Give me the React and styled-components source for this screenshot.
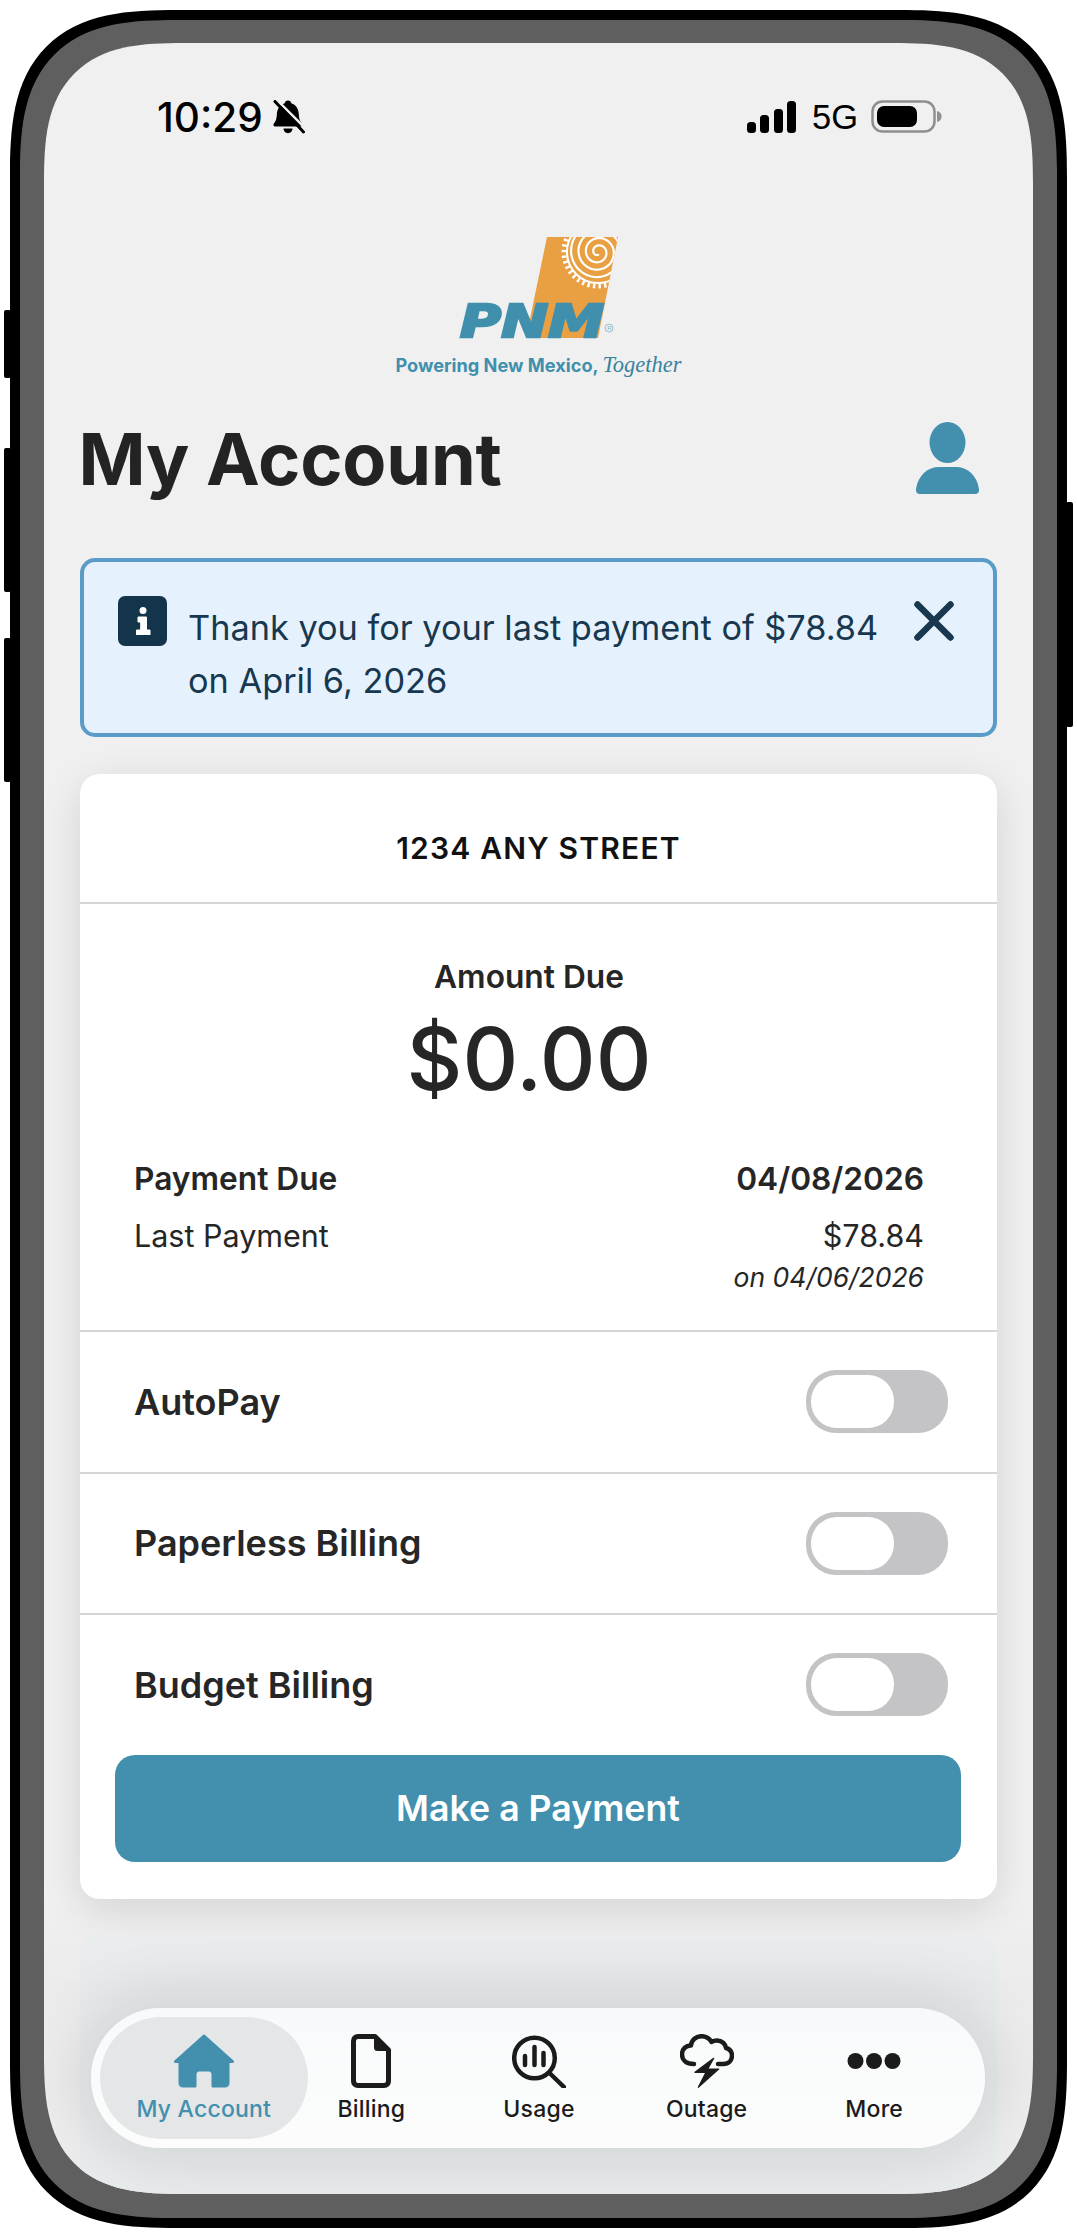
import React from "react";
import styled, { createGlobalStyle } from "styled-components";

const Global = createGlobalStyle`
  html, body { margin: 0; padding: 0; background: #fff; }
  * { box-sizing: border-box; }
  body { font-family: Inter, "Noto Sans", sans-serif; }
`;

const Stage = styled.div`
  width: 1077px;
  height: 2238px;
  padding: 10px;
  background: #fff;
`;
const Phone = styled.div`
  position: relative;
  height: 100%;
  border: 10px solid #000;
  border-radius: 168px;
  corner-shape: superellipse(1.5);
  background: #5f5f5f;
  padding: 23px 24px 24px 24px;
`;
const SideKey = styled.span`
  position: absolute;
  top: ${(p) => p.$top}px;
  height: ${(p) => p.$h}px;
  ${(p) => (p.$right ? "right: -16px;" : "left: -16px;")}
  width: 7px;
  background: #000;
  border-radius: 2px;
`;
const Screen = styled.div`
  position: relative;
  height: 100%;
  overflow: hidden;
  background: #f0f0f0;
  border-radius: 140px;
  corner-shape: superellipse(1.5);
  padding: 0 36px;
`;
const Status = styled.div`
  display: flex;
  justify-content: space-between;
  align-items: center;
  height: 33px;
  margin-top: 57px;
  padding: 0 55px 0 77px;
  color: #000;
`;
const StatusGroup = styled.div`
  display: flex;
  align-items: center;
  gap: ${(p) => p.$gap}px;
`;
const Clock = styled.span`
  font-size: 40.5px;
  font-weight: 500;
  line-height: 33px;
  padding-top: 2px;
`;
const Net = styled.span`
  font-family: "Liberation Sans", sans-serif;
  font-size: 34.5px;
  line-height: 33px;
  padding-top: 2px;
  margin-right: -3px;
`;
const Brand = styled.div`
  margin-top: 104px;
  display: flex;
  flex-direction: column;
  align-items: center;
`;
const Tagline = styled.div`
  height: 26px;
  line-height: 26px;
  font-size: 18.2px;
  font-weight: 650;
  color: #3f8fad;
  white-space: nowrap;
  em {
    font-family: "Liberation Serif", serif;
    font-style: italic;
    font-weight: 400;
    font-size: 22.5px;
    color: #38829f;
  }
`;
const TitleRow = styled.div`
  margin-top: 32px;
  height: 96px;
  display: flex;
  align-items: center;
  justify-content: space-between;
  padding-right: 17px;
`;
const Title = styled.h1`
  margin: 0 0 0 -1.5px;
  font-size: 72px;
  font-weight: 700;
  color: #232323;
  letter-spacing: -0.2px;
`;
const Alert = styled.div`
  margin-top: 52px;
  height: 179px;
  border: 4px solid #5a9bc8;
  border-radius: 15px;
  background: #e5f2fe;
  display: flex;
  padding: 34px 39px 0 34px;
  color: #17384f;
`;
const InfoBadge = styled.div`
  flex: none;
  width: 49px;
  height: 50px;
  border-radius: 7px;
  background: #14344b;
  display: flex;
  align-items: center;
  justify-content: center;
`;
const AlertText = styled.div`
  flex: 1;
  margin: 5px 0 0 21px;
  font-size: 34.3px;
  line-height: 53px;
`;
const CloseBox = styled.div`
  flex: none;
  margin-top: 5px;
`;
const Card = styled.section`
  margin-top: 37px;
  background: #fff;
  border-radius: 20px;
  box-shadow: 0 10px 40px rgba(0, 0, 0, 0.12);
  padding-bottom: 37px;
`;
const Address = styled.div`
  height: 130px;
  padding-top: 19px;
  display: flex;
  align-items: center;
  justify-content: center;
  border-bottom: 2.5px solid #d5d5d5;
  font-size: 30px;
  font-weight: 600;
  letter-spacing: 1.2px;
  color: #111;
`;
const Summary = styled.div`
  padding: 53px 73px 33px 54px;
  color: #262626;
`;
const DueLabel = styled.div`
  text-align: center;
  font-size: 31.7px;
  line-height: 40px;
  font-weight: 600;
`;
const DueAmount = styled.div`
  margin-top: 12px;
  text-align: center;
  font-size: 86.5px;
  font-weight: 450;
  line-height: 100px;
`;
const DetailRow = styled.div`
  display: flex;
  justify-content: space-between;
  font-size: ${(p) => (p.$bold ? 31.7 : 30.5)}px;
  line-height: 40px;
  font-weight: ${(p) => (p.$bold ? 600 : 400)};
  margin-top: ${(p) => p.$mt}px;
`;
const PayDate = styled.div`
  text-align: right;
  font-size: 26.5px;
  line-height: 40px;
  font-style: italic;
  margin-top: 1px;
`;
const ToggleRow = styled.div`
  height: 141.5px;
  border-top: 2.5px solid #d5d5d5;
  display: flex;
  align-items: center;
  justify-content: space-between;
  padding: 0 49px 0 54px;
  font-size: 36px;
  font-weight: 600;
  color: #262626;
`;
const Toggle = styled.div`
  width: 142px;
  height: 63px;
  border-radius: 30px;
  background: #c4c4c6;
  padding: 5px;
  display: flex;
`;
const Knob = styled.div`
  width: 83px;
  height: 53px;
  border-radius: 26px;
  background: #fff;
`;
const PayButton = styled.div`
  margin: 0 36px 0 35px;
  height: 107px;
  border-radius: 20px;
  background: #428fae;
  color: #fff;
  font-size: 35.7px;
  font-weight: 600;
  display: flex;
  align-items: center;
  justify-content: center;
`;
const NextCard = styled.section`
  margin-top: 36px;
  height: 300px;
  background: #ebeff0;
  border-radius: 20px;
`;
const Fade = styled.div`
  position: absolute;
  left: 0;
  right: 0;
  bottom: 0;
  height: 300px;
  background: linear-gradient(180deg, rgba(0,0,0,0) 0%, rgba(0,0,0,0.02) 30%, rgba(0,0,0,0.01) 100%);
`;
const TabBar = styled.nav`
  position: absolute;
  left: 47px;
  right: 48px;
  bottom: 46px;
  height: 140px;
  border-radius: 70px;
  background: linear-gradient(180deg, #f7fafb 0%, #fcfcfc 100%);
  box-shadow: 0 0 60px 14px rgba(0, 0, 0, 0.1);
  padding: 0 27px 0 29px;
  display: grid;
  grid-template-columns: repeat(5, 1fr);
  align-items: center;
`;
const ActivePill = styled.span`
  position: absolute;
  left: 9px;
  top: 9px;
  width: 208px;
  height: 122px;
  border-radius: 61px;
  background: #e4e6e7;
`;
const Tab = styled.div`
  position: relative;
  display: flex;
  flex-direction: column;
  align-items: center;
  color: ${(p) => (p.$active ? "#428fae" : "#1b1b1b")};
  font-size: 23px;
  font-weight: 450;
  letter-spacing: 0.2px;
  padding-top: 1px;
`;
const TabIcon = styled.div`
  height: 54px;
  display: flex;
  align-items: center;
  justify-content: center;
`;
const TabLabel = styled.div`
  margin-top: 7px;
  line-height: 28px;
  white-space: nowrap;
`;

const Bell = () => (
  <svg width="34" height="34" viewBox="0 0 34 34">
    <path d="M16 .5c1.900 0 3 1.200 3.300 2.800C24 4.800 26.500 9 26.800 14c.3 4.700 1 7.300 3 9.400 1 1.100.4 3.100-1.300 3.100H3.200c-1.700 0-2.300-2-1.300-3.100 2-2.100 2.700-4.700 3-9.400C5.200 9 7.800 4.800 12.700 3.300 13 1.700 14.100.5 16 .5z" fill="#000" />
    <path d="M11.500 28.500h9c0 2.600-2 4.700-4.500 4.700s-4.500-2.100-4.500-4.700z" fill="#000" />
    <path d="M5 0 35 30" stroke="#f0f0f0" strokeWidth="2.400" />
    <path d="M3 1.500 31.500 32" stroke="#000" strokeWidth="3" strokeLinecap="round" />
  </svg>
);
const Signal = () => (
  <svg width="49" height="32" viewBox="0 0 49 32" fill="#000">
    <rect x="0" y="21" width="9" height="11" rx="3.500" />
    <rect x="13" y="14" width="9" height="18" rx="3.500" />
    <rect x="27" y="8" width="9" height="24" rx="3.500" />
    <rect x="40" y="0" width="9" height="32" rx="3.500" />
  </svg>
);
const Battery = () => (
  <svg width="71" height="33" viewBox="0 0 71 33">
    <rect x="1.500" y="1.500" width="62" height="30" rx="10" fill="none" stroke="#8f8f8f" strokeWidth="2.500" />
    <rect x="6" y="6" width="40" height="21" rx="7" fill="#000" />
    <path d="M66 11c3 .6 4.600 3 4.600 5.500S69 21.400 66 22z" fill="#8f8f8f" />
  </svg>
);

const spiral = () => {
  let d = "";
  for (let i = 0; i <= 190; i++) {
    const t = (i / 190) * Math.PI * 2 * 3.6;
    const r = 2.4 + (t / (Math.PI * 2)) * 7.4;
    const x = 597 + r * Math.cos(t + 1.2);
    const y = 252 + r * Math.sin(t + 1.2);
    d += `${i ? "L" : "M"}${x.toFixed(2)} ${y.toFixed(2)}`;
  }
  return d;
};

const Logo = () => (
  <svg width="170" height="115" viewBox="453 237 170 115">
    <defs>
      <clipPath id="flag"><path d="M546 237H617L597 338H525Z" /></clipPath>
    </defs>
    <path d="M546 237H617L597 338H525Z" fill="#e9a043" />
    <g clipPath="url(#flag)" fill="none" stroke="#fff">
      <path d={spiral()} strokeWidth="2.200" />
      <circle cx="597" cy="252" r="31" strokeWidth="2" />
      <circle cx="597" cy="252" r="34" strokeWidth="5" strokeDasharray="2.400 3.200" />
    </g>
    <text x="459" y="337" fontFamily="DejaVu Sans" fontWeight="700" fontStyle="italic" fontSize="44" fill="#3f8fad" stroke="#3f8fad" strokeWidth="2.400" textLength="144" lengthAdjust="spacingAndGlyphs">PNM</text>
    <circle cx="608" cy="328" r="4" fill="none" stroke="#7db2c7" strokeWidth="0.800" />
    <text x="606.200" y="330.300" fontFamily="Liberation Sans" fontSize="6" fill="#7db2c7">R</text>
  </svg>
);

const UserIcon = () => (
  <svg width="65" height="72" viewBox="0 0 65 72" fill="#428fae">
    <ellipse cx="32.500" cy="20.500" rx="18" ry="20.500" />
    <path d="M1 67C3 53 13 45 24 45h17c11 0 21 8 23 22 .4 3-1 5-4 5H5c-3 0-4.400-2-4-5z" />
  </svg>
);
const InfoGlyph = () => (
  <svg width="16" height="28" viewBox="0 0 16 28" fill="#fff">
    <circle cx="8" cy="3.500" r="3.500" />
    <path d="M3 10h8.500v13H15v5H1.500v-5h4.200v-8H3z" stroke="#fff" strokeWidth="1" strokeLinejoin="round" />
  </svg>
);
const CloseIcon = () => (
  <svg width="40" height="40" viewBox="0 0 40 40" stroke="#17384f" strokeWidth="6.500" strokeLinecap="round" fill="none">
    <path d="M3.500 3.500 36.500 36.500M36.500 3.500 3.500 36.500" />
  </svg>
);
const HomeIcon = () => (
  <svg width="62" height="54" viewBox="0 0 62 54" fill="#428fae">
    <path d="M31 2 2.500 27.500h4.500V48.500c0 2 1 3.500 3.500 3.500h11.500V41c0-3 2-5 4-5h10c2 0 4 2 4 5v11h11.500c2.500 0 3.500-1.500 3.500-3.500V27.500h4.500z" stroke="#428fae" strokeWidth="3" strokeLinejoin="round" />
  </svg>
);
const BillIcon = () => (
  <svg width="40" height="54" viewBox="0 0 40 54" fill="none" stroke="#1b1b1b">
    <path d="M7 2.500H24L37.500 16V47c0 2.800-1.700 4.500-4.500 4.500H7c-2.800 0-4.500-1.700-4.500-4.500V7C2.500 4.200 4.200 2.500 7 2.500z" strokeWidth="5" strokeLinejoin="round" />
    <path d="M24 3 37 16H26.500c-1.500 0-2.500-1-2.500-2.500z" fill="#1b1b1b" strokeWidth="2" strokeLinejoin="round" />
  </svg>
);
const UsageIcon = () => (
  <svg width="54" height="54" viewBox="0 0 54 54" fill="none" stroke="#1b1b1b">
    <circle cx="22.500" cy="24" r="20.300" strokeWidth="4.500" />
    <path d="M37.500 39 52 53" strokeWidth="4.500" strokeLinecap="round" />
    <path d="M13 22v9M22.500 13v18M31.500 19v12" strokeWidth="4.500" strokeLinecap="round" />
  </svg>
);
const OutageIcon = () => (
  <svg width="54" height="54" viewBox="0 0 54 54" fill="none">
    <path d="M14 30C6 30 2 26 2 20.500 2 15 6 11.500 11 11.500 11.500 6 16 2.200 21.500 2.200c4.500 0 8 2.300 10 5.800 1.500-1 3.500-1.500 5.500-1.500 5 0 8.500 3.500 9 7.500 3.500 1 6 3.500 6 7.500 0 5-3.500 8.500-8.500 8.500H38" stroke="#1b1b1b" strokeWidth="4.500" strokeLinecap="round" strokeLinejoin="round" />
    <path d="M33.700 24.300 15 38.300h11L18.300 53.300 38.700 35H27.700z" fill="#1b1b1b" stroke="#1b1b1b" strokeWidth="1.200" strokeLinejoin="round" />
  </svg>
);
const MoreIcon = () => (
  <svg width="54" height="18" viewBox="0 0 54 18" fill="#1b1b1b">
    <circle cx="8.500" cy="9" r="8" />
    <circle cx="27" cy="9" r="8" />
    <circle cx="45.500" cy="9" r="8" />
  </svg>
);

const tabs = [
  { label: "My Account", Icon: HomeIcon, active: true },
  { label: "Billing", Icon: BillIcon },
  { label: "Usage", Icon: UsageIcon },
  { label: "Outage", Icon: OutageIcon },
  { label: "More", Icon: MoreIcon },
];

export default function App() {
  return (
    <Stage>
      <Global />
      <Phone>
        <SideKey $top={290} $h={68} />
        <SideKey $top={428} $h={144} />
        <SideKey $top={618} $h={144} />
        <SideKey $right $top={482} $h={225} />
        <Screen>
          <Status>
            <StatusGroup $gap={9}>
              <Clock>10:29</Clock>
              <Bell />
            </StatusGroup>
            <StatusGroup $gap={16}>
              <Signal />
              <Net>5G</Net>
              <Battery />
            </StatusGroup>
          </Status>
          <Brand>
            <Logo />
            <Tagline>Powering New Mexico, <em>Together</em></Tagline>
          </Brand>
          <TitleRow>
            <Title>My Account</Title>
            <UserIcon />
          </TitleRow>
          <Alert>
            <InfoBadge><InfoGlyph /></InfoBadge>
            <AlertText>Thank you for your last payment of $78.84 on April 6, 2026</AlertText>
            <CloseBox><CloseIcon /></CloseBox>
          </Alert>
          <Card>
            <Address>1234 ANY STREET</Address>
            <Summary>
              <DueLabel>Amount Due</DueLabel>
              <DueAmount>$0.00</DueAmount>
              <DetailRow $bold $mt={50}><span>Payment Due</span><span>04/08/2026</span></DetailRow>
              <DetailRow $mt={17}><span>Last Payment</span><span>$78.84</span></DetailRow>
              <PayDate>on 04/06/2026</PayDate>
            </Summary>
            {["AutoPay", "Paperless Billing", "Budget Billing"].map((label) => (
              <ToggleRow key={label}>
                {label}
                <Toggle><Knob /></Toggle>
              </ToggleRow>
            ))}
            <PayButton>Make a Payment</PayButton>
          </Card>
          <NextCard />
          <Fade />
          <TabBar>
            <ActivePill />
            {tabs.map(({ label, Icon, active }) => (
              <Tab key={label} $active={active}>
                <TabIcon><Icon /></TabIcon>
                <TabLabel>{label}</TabLabel>
              </Tab>
            ))}
          </TabBar>
        </Screen>
      </Phone>
    </Stage>
  );
}
